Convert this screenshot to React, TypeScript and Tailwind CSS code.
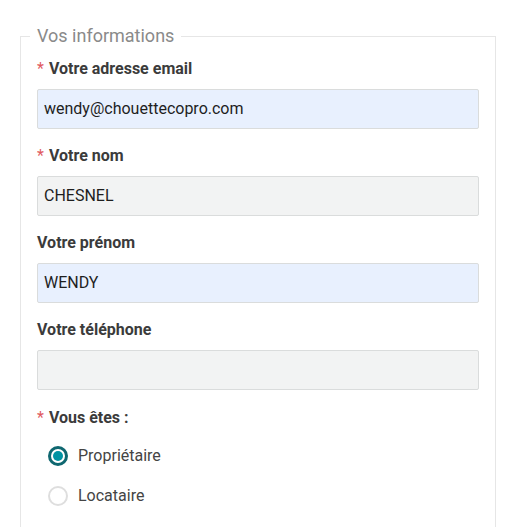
import React from "react";

const Label = ({ text, required }: { text: string; required?: boolean }) => (
  <div className="h-5 flex items-center text-[16px] font-bold text-[#3b3b3b] leading-5 mb-[10px]">
    {required && <span className="text-[#e05a5f] font-normal mr-[5px]">*</span>}
    <span>{text}</span>
  </div>
);

const Input = ({ value, bg }: { value: string; bg: string }) => (
  <div
    className={`h-10 w-full border border-[#dadcdc] rounded-[2px] flex items-center pl-[6px] text-[16px] text-[#1e1e1e] ${bg}`}
  >
    {value}
  </div>
);

export default function App() {
  return (
    <div className="bg-white min-h-[527px] w-[513px] pt-[24px] pl-[20px]" style={{ fontFamily: "Roboto, 'Liberation Sans', sans-serif" }}>
      <fieldset className="w-[476px] border border-[#e6e6e6] px-4 pb-4 m-0 min-w-0">
        <legend className="ml-[-7px] px-[7px] text-[18px] leading-6 text-[#8a8a8a]">Vos informations</legend>
        <div className="pt-[11px]">
          <Label text="Votre adresse email" required />
          <Input value="wendy@chouettecopro.com" bg="bg-[#e8f0fe]" />
          <div className="h-[17px]" />
          <Label text="Votre nom" required />
          <Input value="CHESNEL" bg="bg-[#f2f3f3]" />
          <div className="h-[17px]" />
          <Label text="Votre prénom" />
          <Input value="WENDY" bg="bg-[#e8f0fe]" />
          <div className="h-[17px]" />
          <Label text="Votre téléphone" />
          <Input value="" bg="bg-[#f2f3f3]" />
          <div className="h-[18px]" />
          <Label text="Vous êtes :" required />
          <div className="flex flex-col pl-[11px] mt-[-2px]">
            <div className="h-10 flex items-center">
              <span className="w-5 h-5 rounded-full border-[3px] border-[#0f6770] flex items-center justify-center">
                <span className="w-[10px] h-[10px] rounded-full bg-[#0093a3]" />
              </span>
              <span className="ml-[10px] text-[16px] text-[#444]">Propriétaire</span>
            </div>
            <div className="h-10 flex items-center">
              <span className="w-5 h-5 rounded-full border-2 border-[#dedede] bg-white" />
              <span className="ml-[10px] text-[16px] text-[#444]">Locataire</span>
            </div>
          </div>
        </div>
      </fieldset>
    </div>
  );
}
